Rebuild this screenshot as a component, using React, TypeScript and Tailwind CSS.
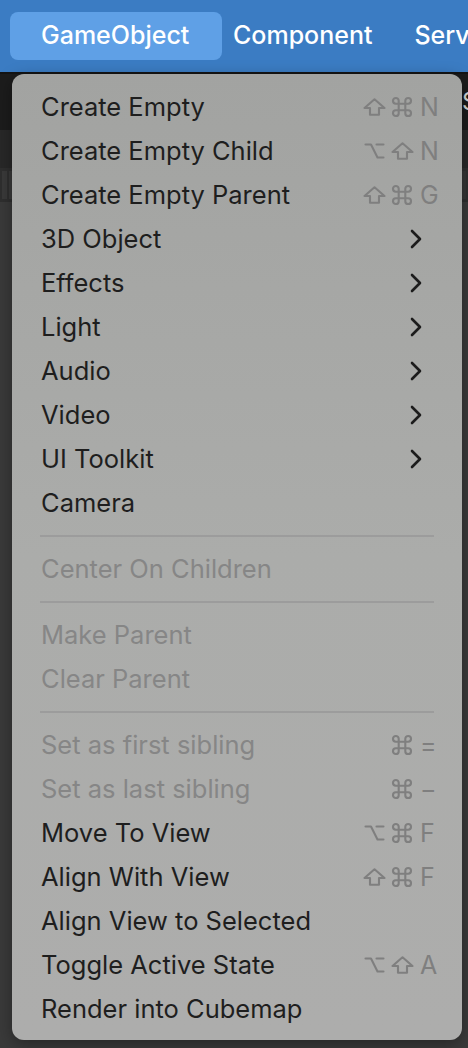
import React from "react";

type Mod = "shift" | "cmd" | "opt";
type Item =
  | { type: "sep" }
  | {
      type: "item";
      label: string;
      disabled?: boolean;
      sub?: boolean;
      keys?: [Mod | null, Mod | null, string];
    };

const items: Item[] = [
  { type: "item", label: "Create Empty", keys: ["shift", "cmd", "N"] },
  { type: "item", label: "Create Empty Child", keys: ["opt", "shift", "N"] },
  { type: "item", label: "Create Empty Parent", keys: ["shift", "cmd", "G"] },
  { type: "item", label: "3D Object", sub: true },
  { type: "item", label: "Effects", sub: true },
  { type: "item", label: "Light", sub: true },
  { type: "item", label: "Audio", sub: true },
  { type: "item", label: "Video", sub: true },
  { type: "item", label: "UI Toolkit", sub: true },
  { type: "item", label: "Camera" },
  { type: "sep" },
  { type: "item", label: "Center On Children", disabled: true },
  { type: "sep" },
  { type: "item", label: "Make Parent", disabled: true },
  { type: "item", label: "Clear Parent", disabled: true },
  { type: "sep" },
  { type: "item", label: "Set as first sibling", disabled: true, keys: [null, "cmd", "="] },
  { type: "item", label: "Set as last sibling", disabled: true, keys: [null, "cmd", "−"] },
  { type: "item", label: "Move To View", keys: ["opt", "cmd", "F"] },
  { type: "item", label: "Align With View", keys: ["shift", "cmd", "F"] },
  { type: "item", label: "Align View to Selected" },
  { type: "item", label: "Toggle Active State", keys: ["opt", "shift", "A"] },
  { type: "item", label: "Render into Cubemap" },
];

function ModIcon({ m }: { m: Mod }) {
  const common = {
    fill: "none",
    stroke: "#7f7f7f",
    strokeWidth: 2.1,
    strokeLinejoin: "round" as const,
    strokeLinecap: "round" as const,
  };
  if (m === "shift")
    return (
      <svg width="23" height="18" viewBox="0 0 23 18">
        <path d="M11.5 1.3 L21.5 10 H16 V16.7 H7 V10 H1.5 Z" {...common} />
      </svg>
    );
  if (m === "cmd")
    return (
      <svg width="22" height="22" viewBox="0 0 20 20">
        <path
          d="M7 7h6v6H7z M7 7V4.4a2.6 2.6 0 1 0-2.6 2.6H7 M13 7V4.4a2.6 2.6 0 1 1 2.6 2.6H13 M7 13v2.6a2.6 2.6 0 1 1-2.6-2.6H7 M13 13v2.6a2.6 2.6 0 1 0 2.6-2.6H13"
          {...common}
          strokeWidth={1.9}
        />
      </svg>
    );
  return (
    <svg width="21" height="18" viewBox="0 0 21 18">
      <path d="M1.5 2.5 H7 L13.5 15.5 H19.5 M12.5 2.5 H19.5" {...common} />
    </svg>
  );
}

function Chevron() {
  return (
    <svg width="12" height="20" viewBox="0 0 12 20">
      <polyline
        points="2,2 10,10 2,18"
        fill="none"
        stroke="#1c1c1c"
        strokeWidth="2.6"
        strokeLinecap="round"
        strokeLinejoin="round"
      />
    </svg>
  );
}

export default function App() {
  return (
    <div
      className="relative w-[468px] h-[1048px] overflow-hidden bg-[#3a3a3a]"
      style={{ fontFamily: "Inter, 'Noto Sans', 'DejaVu Sans', sans-serif" }}
    >
      {/* menu bar */}
      <div className="h-[72px] bg-[#3b7cc3] flex items-center pl-[10px] gap-[11px] text-white text-[25px] font-medium whitespace-nowrap overflow-hidden">
        <div className="shrink-0 h-[48px] w-[212px] rounded-[8px] bg-[#5fa0e6] flex items-center pl-[31px]">GameObject</div>
        <div className="shrink-0">Component</div>
        <div className="shrink-0 ml-[31px]">Serv</div>
      </div>
      <div className="h-[2px] bg-[#141414]" />
      {/* editor background */}
      <div className="flex flex-col">
        <div className="h-[56px] bg-[#1c1c1c] flex justify-end items-start overflow-hidden">
          <span className="text-[#d8d8d8] text-[24px] mt-[10px] w-[6px] overflow-hidden">S</span>
        </div>
        <div className="h-[38px] bg-[#282828]" />
        <div className="h-[34px] bg-[#2f2f2f] flex gap-[2px] px-[2px] py-[3px]">
          <div className="w-[5px] bg-[#3a3a3a]" />
          <div className="w-[5px] bg-[#3a3a3a]" />
          <div className="flex-1" />
          <div className="w-[6px] bg-[#353535]" />
        </div>
        <div className="flex-1 bg-[#3b3b3b]" />
      </div>

      {/* dropdown */}
      <div className="absolute left-[12px] top-[74px] w-[450px] h-[966px] rounded-[12px] bg-gradient-to-b from-[#a2a3a1] via-[#abacaa] to-[#adadac] pt-[11px] pb-[9px] shadow-[0_4px_16px_rgba(0,0,0,0.35)] text-[25.5px]">
        {items.map((it, i) =>
          it.type === "sep" ? (
            <div key={i} className="h-[22px] flex items-center px-[28px]">
              <div className="h-[2px] w-full bg-[#9c9c9c]" />
            </div>
          ) : (
            <div key={i} className="h-[44px] flex items-center pl-[29px] pr-[20px]">
              <span className={"flex-1 whitespace-nowrap " + (it.disabled ? "text-[#868686]" : "text-[#1e1e1e]")}>
                {it.label}
              </span>
              {it.sub && (
                <div className="w-[22px] flex items-center justify-start -ml-[2px] mr-[10px]">
                  <Chevron />
                </div>
              )}
              {it.keys && (
                <div className="flex items-center text-[#7f7f7f] text-[25px]">
                  <div className="w-[24px] mr-[4px] flex justify-center">{it.keys[0] && <ModIcon m={it.keys[0]} />}</div>
                  <div className="w-[24px] mr-[6px] flex justify-center">{it.keys[1] && <ModIcon m={it.keys[1]} />}</div>
                  <div className="w-[22px] leading-none">{it.keys[2]}</div>
                </div>
              )}
            </div>
          )
        )}
      </div>
    </div>
  );
}
